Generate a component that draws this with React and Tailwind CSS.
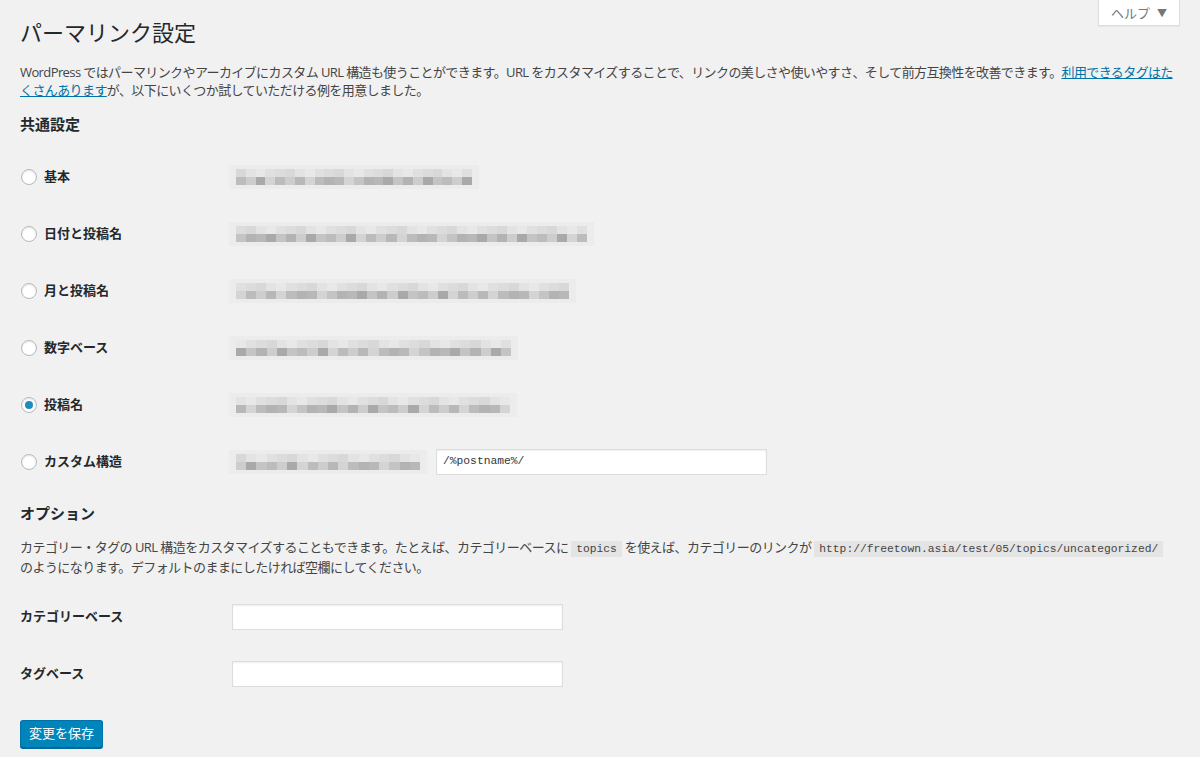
const blurTop = ['bg-[#e3e3e3]', 'bg-[#dcdcdc]', 'bg-[#e8e8e8]', 'bg-[#d8d8d8]', 'bg-[#e0e0e0]'];
const blurBottom = ['bg-[#b3b3b3]', 'bg-[#c4c4c4]', 'bg-[#a9a9a9]', 'bg-[#cdcdcd]', 'bg-[#bcbcbc]', 'bg-[#d4d4d4]', 'bg-[#b8b8b8]'];

const permalinkRows = [
  { label: '基本', width: 'w-[250px]', cells: 24, seed: 1 },
  { label: '日付と投稿名', width: 'w-[365px]', cells: 35, seed: 2 },
  { label: '月と投稿名', width: 'w-[347px]', cells: 33, seed: 3 },
  { label: '数字ベース', width: 'w-[289px]', cells: 27, seed: 4 },
  { label: '投稿名', width: 'w-[288px]', cells: 27, seed: 5, checked: true },
  { label: 'カスタム構造', width: 'w-[198px]', cells: 18, seed: 6, custom: true },
];

const mono = "font-['Liberation_Mono','DejaVu_Sans_Mono',monospace]";
const codeCls = `${mono} bg-[#e4e4e4] px-[5px] py-[2px] text-[11.3px] tracking-normal text-[#444444]`;

const Blurred = ({ width, cells, seed }) => {
  const list = Array.from({ length: cells }, (_, i) => i);
  return (
    <div className={`${width} flex h-[24px] flex-col justify-center bg-[#ececec] px-[7px]`}>
      <div className="flex h-[8px]">
        {list.map((i) => (
          <div key={i} className={`h-full flex-1 ${blurTop[(i * 7 + seed * 3) % blurTop.length]}`} />
        ))}
      </div>
      <div className="flex h-[8px]">
        {list.map((i) => (
          <div key={i} className={`h-full flex-1 ${blurBottom[(i * 5 + seed * 11 + (i % 3)) % blurBottom.length]}`} />
        ))}
      </div>
    </div>
  );
};

const Radio = ({ checked }) => (
  <span className="flex h-4 w-4 shrink-0 items-center justify-center rounded-full border border-[#b4b9be] bg-white shadow-[inset_0_1px_2px_rgba(0,0,0,0.1)]">
    {checked ? <span className="h-2 w-2 rounded-full bg-[#1e8cbe]" /> : null}
  </span>
);

const TextInput = ({ value = '', className = '' }) => (
  <div className={`flex h-[26px] items-center border border-[#dddddd] bg-white px-[6px] shadow-[inset_0_1px_2px_rgba(0,0,0,0.07)] ${className}`}>
    <span className={`${mono} text-[11.3px] text-[#32373c]`}>{value}</span>
  </div>
);

const App = () => {
  return (
    <div className="min-h-screen bg-[#f1f1f1] px-[20px] pb-[10px] font-['Open_Sans','Noto_Sans_CJK_JP',sans-serif] text-[13px] text-[#444444]">
      <div className="float-right flex h-[26px] w-[82px] items-center justify-center gap-[7px] border border-t-0 border-[#dddddd] bg-white pt-[2px] text-[13px] text-[#72777c] shadow-[0_1px_1px_rgba(0,0,0,0.04)]">
        <span>ヘルプ</span>
        <span className="text-[10px]">▼</span>
      </div>

      <h1 className="pt-[18px] text-[22px] leading-[29px] font-normal text-[#23282d]">パーマリンク設定</h1>

      <p className="mt-[16px] leading-[18px] tracking-[-0.6px]">
        <span className="whitespace-nowrap">
          WordPress ではパーマリンクやアーカイブにカスタム URL 構造も使うことができます。URL をカスタマイズすることで、リンクの美しさや使いやすさ、そして前方互換性を改善できます。
          <span className="text-[#0073aa] underline">利用できるタグはた</span>
        </span>
        <br />
        <span className="text-[#0073aa] underline">くさんあります</span>
        が、以下にいくつか試していただける例を用意しました。
      </p>

      <h2 className="mt-[15px] text-[15px] leading-[20px] font-bold text-[#23282d]">共通設定</h2>

      <div className="mt-[14px]">
        {permalinkRows.map((row) => (
          <div key={row.label} className="grid h-[57px] grid-cols-[209px_1fr] items-center">
            <div className="flex items-center gap-[7px] pl-[1px]">
              <Radio checked={row.checked} />
              <span className="font-bold text-[#23282d]">{row.label}</span>
            </div>
            <div className="flex items-center gap-[9px]">
              <Blurred width={row.width} cells={row.cells} seed={row.seed} />
              {row.custom ? <TextInput value="/%postname%/" className="w-[331px]" /> : null}
            </div>
          </div>
        ))}
      </div>

      <h2 className="mt-[13px] text-[15px] leading-[20px] font-bold text-[#23282d]">オプション</h2>

      <p className="mt-[15px] leading-[18px] tracking-[-0.55px]">
        <span className="whitespace-nowrap">
          カテゴリー・タグの URL 構造をカスタマイズすることもできます。たとえば、カテゴリーベースに{' '}
          <code className={codeCls}>topics</code> を使えば、カテゴリーのリンクが{' '}
          <code className={codeCls}>http://freetown.asia/test/05/topics/uncategorized/</code>
        </span>
        <br />
        のようになります。デフォルトのままにしたければ空欄にしてください。
      </p>

      <div className="mt-[12px]">
        {['カテゴリーベース', 'タグベース'].map((label) => (
          <div key={label} className="grid h-[57px] grid-cols-[212px_1fr] items-center">
            <span className="font-bold text-[#23282d]">{label}</span>
            <TextInput className="w-[331px]" />
          </div>
        ))}
      </div>

      <button
        type="button"
        className="mt-[18px] h-[28px] w-[83px] rounded-[3px] border border-[#0073aa] border-b-[#006799] bg-[#0085ba] text-[13px] text-white shadow-[0_1px_0_#006799]"
      >
        変更を保存
      </button>
    </div>
  );
};

export default App;
